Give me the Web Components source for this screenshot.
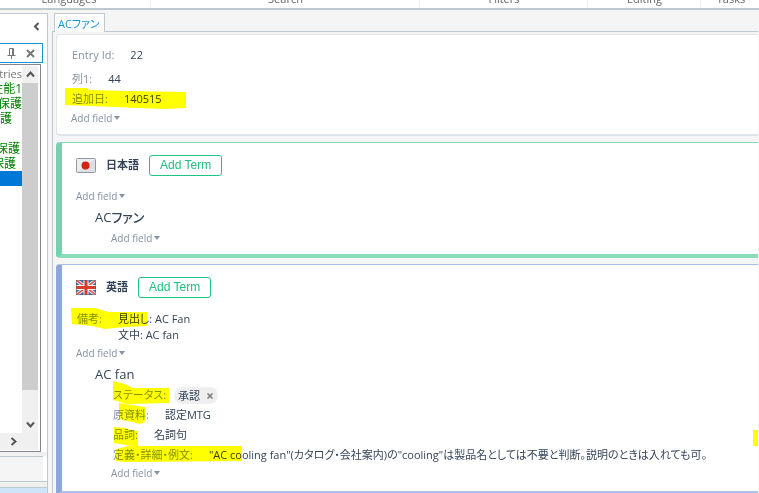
<!DOCTYPE html>
<html lang="ja">
<head>
<meta charset="utf-8">
<title>ACファン</title>
<style>
  * { box-sizing: border-box; }
  body {
    --line: #bccad0;
    --accent: #1296d4;
    --muted: #8492a3;
    --ink: #34445a;
    margin: 0;
    height: 100vh;
    overflow: hidden;
    background: #f5f5f5;
    color: var(--ink);
    font: 11px/16px "Open Sans", "Noto Sans CJK JP", sans-serif;
    font-feature-settings: "palt";
  }
</style>
</head>
<body>
<term-app>
  <ribbon-bar slot="ribbon">
    <ribbon-group style="--w: 164px">Languages</ribbon-group>
    <ribbon-group style="--w: 269px">Search</ribbon-group>
    <ribbon-group style="--w: 168px">Filters</ribbon-group>
    <ribbon-group style="--w: 113px">Editing</ribbon-group>
    <ribbon-group style="--w: 60px">Tasks</ribbon-group>
  </ribbon-bar>

  <side-panel slot="side">
    <entry-row kind="head">Entries</entry-row>
    <entry-row>性能1</entry-row>
    <entry-row>保護</entry-row>
    <entry-row style="--end: 10px">護</entry-row>
    <entry-row></entry-row>
    <entry-row style="--end: 2px">保護</entry-row>
    <entry-row style="--end: 6px">保護</entry-row>
    <entry-row kind="selected"></entry-row>
  </side-panel>

  <doc-tabs label="ACファン">
    <entry-card>
      <term-field label="Entry Id:" style="--h: 24px">22</term-field>
      <term-field label="列1:" style="--h: 24px">44</term-field>
      <term-field label="追加日:" style="--h: 16px" mark="-7,-3 15,-3 17,-1 55,0 114,1 114,17 92,18 67,17 -7,14">140515</term-field>
      <add-field style="--h: 22px; --indent: 12px"></add-field>
    </entry-card>

    <entry-card tone="green">
      <language-head flag="jp" name="日本語"></language-head>
      <add-field style="--h: 20px; --indent: 14px"></add-field>
      <term-name>ACファン</term-name>
      <add-field style="--h: 20px; --indent: 49px"></add-field>
    </entry-card>

    <entry-card tone="blue">
      <language-head flag="gb" name="英語"></language-head>
      <term-field multiline label="備考:" style="--h: 32px; --indent: 15px" mark="-6,0 18,0 31,4 70,4 70,18 48,19 28,21 15,18 -5,16">見出し: AC Fan<br>文中: AC fan</term-field>
      <add-field style="--h: 20px; --indent: 14px"></add-field>
      <term-name>AC fan</term-name>
      <term-field label="ステータス:" style="--h: 20px; --indent: 51px" mark="0,-4 12,-1 20,3 56,3 56,18 14,19 4,16 0,15"><value-chip>承認</value-chip></term-field>
      <term-field label="原資料:" style="--h: 20px; --indent: 51px" mark="6,-2 32,2 32,17 27,19 6,14">認定MTG</term-field>
      <term-field label="品詞:" style="--h: 20px; --indent: 51px" mark="1,2 12,3 18,5 25,6 25,22 1,18" end-mark>名詞句</term-field>
      <term-field label="定義・詳細・例文:" style="--h: 20px; --indent: 51px" mark="3,4 15,1 129,1 129,16 12,17 3,16">"AC cooling fan"(カタログ・会社案内)の"cooling"は製品名としては不要と判断。説明のときは入れても可。</term-field>
      <add-field style="--h: 16px; --indent: 49px"></add-field>
    </entry-card>
  </doc-tabs>
</term-app>

<script>
// Small helper: every element is a template in an open shadow root
function define(name, css, html) {
  customElements.define(
    name,
    class extends HTMLElement {
      constructor() {
        super();
        const shadow = this.attachShadow({ mode: "open" });
        const template = document.createElement("template");
        const markup = typeof html === "function" ? html(this) : html;
        template.innerHTML = `<style>* { box-sizing: border-box; } ${css}</style>${markup}`;
        shadow.appendChild(template.content.cloneNode(true));
      }
    }
  );
}

define("term-app", `
  :host {
    display: grid;
    grid-template: auto minmax(0, 1fr) / 48px minmax(0, 1fr);
    height: 100%;
  }
  ::slotted([slot="ribbon"]) { grid-column: 1 / -1; }
`, `<slot name="ribbon"></slot><slot name="side"></slot><slot></slot>`);

define("ribbon-bar", `
  :host {
    display: flex;
    align-items: flex-end;
    height: 10px;
    overflow: hidden;
    background: #fff;
    border-bottom: 2px solid var(--line);
    color: #666;
    font-size: 11px;
  }
  nav { display: flex; margin-left: -13px; }
`, `<nav aria-label="Ribbon"><slot></slot></nav>`);

define("ribbon-group", `
  :host {
    flex: none;
    width: var(--w);
    text-align: center;
    background: linear-gradient(#eee, #eee) right / 1px 100% no-repeat;
    padding-bottom: 1px;
  }
`, `<slot></slot>`);

define("side-panel", `
  :host {
    display: flex;
    flex-direction: column;
    min-height: 0;
    padding-top: 3px;
  }
  button { all: unset; display: grid; place-items: center; }
  svg { display: block; fill: none; stroke: #555; }
  .panel {
    flex: 1;
    display: flex;
    flex-direction: column;
    min-height: 0;
    border: solid var(--line);
    border-width: 1px 1px 0 0;
    background: #fff;
  }
  .top { display: flex; justify-content: flex-end; padding: 8px 7px 12px 0; }
  .bar {
    display: flex;
    justify-content: flex-end;
    align-items: center;
    gap: 10px;
    height: 20px;
    margin-right: 4px;
    padding-right: 7px;
    border: solid var(--accent);
    border-width: 1px 1px 1px 0;
  }
  .box {
    flex: 1;
    display: grid;
    grid-template: minmax(0, 1fr) 17px / minmax(0, 1fr) 16px;
    min-height: 0;
    margin: 1px 6px 0 0;
    border: solid #82868c;
    border-width: 1px 1px 1px 0;
    padding: 1px 2px 1px 0;
  }
  .list { overflow: hidden; }
  .vbar { display: flex; flex-direction: column; background: #f0f0f0; }
  .vbar button { height: 17px; }
  .thumb { flex: 1; background: #cdcdcd; margin-bottom: 26px; }
  .hbar { grid-column: 1 / -1; display: flex; background: #f0f0f0; }
  .hbar button { width: 27px; }
  .gap { height: 4px; background: #f0f0f0; }
  .foot { height: 25px; margin-right: 4px; border: solid var(--line); border-width: 1px 0 0; background: #f5f5f5; }
  .split { height: 7px; border: solid var(--line); border-width: 1px 0; background: #f0f0f0; }
  .tab { height: 5px; background: #cce6f8; }
`, `
  <div class="panel">
    <div class="top"><button aria-label="Collapse"><svg width="7" height="9" stroke-width="2"><path d="M5.500 1 2 4.500 5.500 8"/></svg></button></div>
    <div class="bar">
      <button aria-label="Pin"><svg width="9" height="11" style="stroke:#777"><path d="M2.500 7V.5h4V7M5.500.5V7M.5 7.500h8M4.500 7v4"/></svg></button>
      <button aria-label="Close"><svg width="9" height="9" stroke-width="2" style="stroke:#777"><path d="m1 1 7 7M8 1 1 8"/></svg></button>
    </div>
    <div class="box">
      <div class="list"><slot></slot></div>
      <div class="vbar">
        <button aria-label="Scroll up"><svg width="9" height="7" stroke-width="2"><path d="m1 5.500 3.500-4L8 5.500"/></svg></button>
        <div class="thumb"></div>
        <button aria-label="Scroll down"><svg width="9" height="7" stroke-width="2"><path d="m1 1.500 3.500 4 3.500-4"/></svg></button>
      </div>
      <div class="hbar"><button aria-label="Scroll right"><svg width="7" height="9" stroke-width="2"><path d="m1.500 1 4 3.500-4 3.500"/></svg></button></div>
    </div>
    <div class="gap"></div>
    <div class="foot"></div>
    <div class="split"></div>
    <div class="tab"></div>
  </div>
`);

define("entry-row", `
  :host {
    display: flex;
    justify-content: flex-end;
    height: 15px;
    padding-right: var(--end, 0);
    overflow: hidden;
    color: #008000;
    font-size: 12px;
    line-height: 15px;
    white-space: nowrap;
  }
  :host([kind="head"]) { color: #777; font-size: 11px; }
  :host([kind="selected"]) { background: #0078d7; }
`, `<slot></slot>`);

define("doc-tabs", `
  :host { display: block; min-width: 0; padding: 3px 1px 0 4px; }
  .strip { display: flex; height: 19px; }
  .strip::before { content: ""; width: 2px; border-bottom: 1px solid var(--line); }
  .strip::after { content: ""; flex: 1; border-bottom: 1px solid var(--line); }
  button {
    all: unset;
    box-sizing: border-box;
    height: 19px;
    padding: 0 4px 0 3px;
    border: solid var(--line);
    border-width: 1px 1px 0;
    background: #fff;
    color: var(--accent);
    font-size: 11px;
    line-height: 17px;
  }
  main {
    display: flex;
    flex-direction: column;
    gap: 6px;
    height: calc(100% - 19px);
    padding: 2px 0 0 3px;
    border-left: 1px solid var(--line);
  }
`, (el) => `
  <div class="strip" role="tablist"><button role="tab" aria-selected="true">${el.getAttribute("label")}</button></div>
  <main><slot></slot></main>
`);

define("entry-card", `
  :host {
    display: block;
    flex: none;
    padding: 8px 0 5px 2px;
    background: #fff;
    border: solid #dfe4e8;
    border-width: 1px 0 2px 1px;
    border-radius: 4px 0 0 4px;
  }
  :host([tone="green"]) {
    border-color: #7fdab6 #8addb9 #8addb9 #74d3ae;
    border-width: 1px 0 4px 6px;
    padding: 8px 0 6px;
  }
  :host([tone="blue"]) {
    border-color: #a9bde8 #abc0ea #abc0ea #8ea6db;
    border-width: 1px 0 4px 6px;
    padding: 8px 0 10px;
  }
`, `<slot></slot>`);

// Felt-tip stroke drawn over a field, in the field's own coordinates
const stroke = (points) => points
  ? `<svg class="mark" width="1" height="1" aria-hidden="true"><polygon fill="#ff0" points="${points}"/></svg>`
  : "";

define("term-field", `
  :host { display: block; min-height: var(--h); padding-left: var(--indent, 13px); }
  dl {
    position: relative;
    display: flex;
    align-items: flex-start;
    gap: 16px;
    margin: 0;
    padding-top: calc((var(--h) - 16px) / 2);
    white-space: nowrap;
  }
  :host([multiline]) dl { padding-top: 3px; }
  dt { color: var(--muted); }
  dd { margin: 0; }
  .mark { position: absolute; left: 0; top: 0; overflow: visible; mix-blend-mode: multiply; }
  .end { position: absolute; right: 0; top: 5px; width: 5px; height: 16px; background: #ff0; }
`, (el) => `
  <dl><dt>${el.getAttribute("label")}</dt><dd><slot></slot></dd>${stroke(el.getAttribute("mark"))}${el.hasAttribute("end-mark") ? '<span class="end"></span>' : ""}</dl>
`);

define("add-field", `
  :host { display: flex; align-items: center; height: var(--h); padding-left: var(--indent); }
  button {
    all: unset;
    display: flex;
    align-items: center;
    gap: 2px;
    color: var(--muted);
    font-size: 10px;
  }
  i { border: solid transparent; border-width: 4px 3px 0; border-top-color: var(--muted); }
`, `<button>Add field <i></i></button>`);

define("term-name", `
  :host { display: block; padding-left: 33px; font-size: 13px; font-weight: 500; line-height: 22px; }
  h3 { margin: 0; font: inherit; }
`, `<h3><slot></slot></h3>`);

define("value-chip", `
  :host {
    display: inline-flex;
    align-items: center;
    gap: 7px;
    height: 17px;
    padding: 0 5px 0 4px;
    margin-left: -8px;
    border-radius: 9px;
    background: #efeff0;
  }
  button { all: unset; display: grid; }
  svg { fill: none; stroke: #777; }
`, `<slot></slot><button aria-label="Remove"><svg width="6" height="6"><path stroke-width="1.500" d="m.5.5 5 5m0-5-5 5"/></svg></button>`);

const flags = {
  jp: `<rect x=".5" y=".5" width="19" height="14" rx="1" fill="#eceef0" stroke="#9299a5"/>
    <path d="M1 14 19 1v13z" fill="#dcdfe3"/>
    <circle cx="9.500" cy="7.500" r="4" fill="#d0260f"/>`,
  gb: `<rect width="20" height="15" rx="1" fill="#4269a4"/>
    <path d="m0 0 20 15M20 0 0 15" stroke="#e8ecf3" stroke-width="3.500"/>
    <path d="m0 0 20 15M20 0 0 15" stroke="#dc5548" stroke-width="1.500"/>
    <path d="M10 0v15M0 7.500h20" stroke="#f4f5f7" stroke-width="5"/>
    <path d="M10 0v15M0 7.500h20" stroke="#d63b2c" stroke-width="3"/>
    <rect x=".5" y=".5" width="19" height="14" rx="1" fill="none" stroke="#55606f" stroke-opacity=".5"/>`
};

define("language-head", `
  :host { display: flex; align-items: center; gap: 10px; height: 28px; margin-bottom: 7px; padding-left: 14px; }
  h2 { margin: 0; font-size: 11px; line-height: 16px; }
  button {
    height: 21px;
    padding: 0 10px;
    border: 1px solid #1fc584;
    border-radius: 3px;
    background: #fff;
    color: #1fbf80;
    font: 12px/16px "Liberation Sans", sans-serif;
  }
`, (el) => `
  <svg width="20" height="15" aria-hidden="true">${flags[el.getAttribute("flag")]}</svg>
  <h2>${el.getAttribute("name")}</h2>
  <button>Add Term</button>
`);
</script>
</body>
</html>
